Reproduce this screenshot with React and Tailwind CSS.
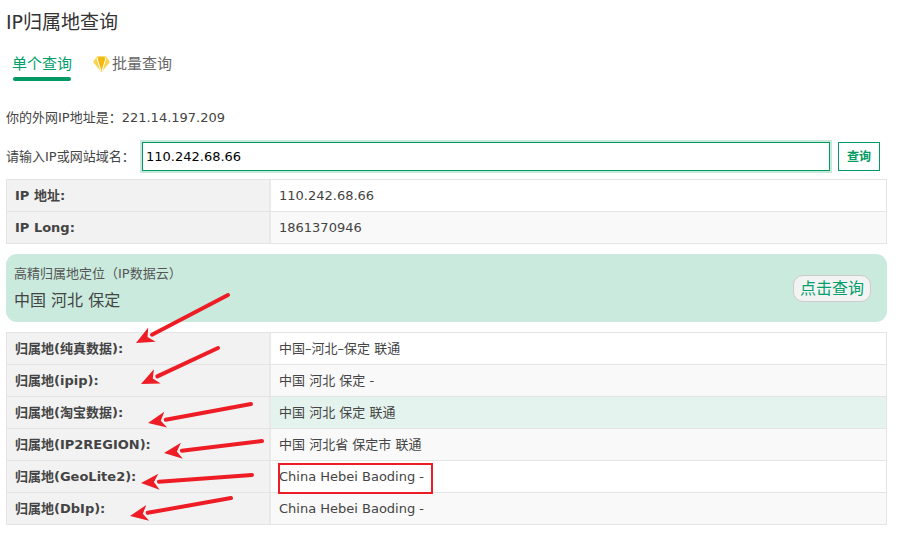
import React from "react";

const font = { fontFamily: '"DejaVu Sans", "Noto Sans CJK SC", sans-serif' };

const basicRows = [
  ["IP 地址:", "110.242.68.66"],
  ["IP Long:", "1861370946"],
];

const locationRows = [
  ["归属地(纯真数据):", "中国–河北–保定 联通"],
  ["归属地(ipip):", "中国 河北 保定 -"],
  ["归属地(淘宝数据):", "中国 河北 保定 联通", "bg-[#e4f3ee]"],
  ["归属地(IP2REGION):", "中国 河北省 保定市 联通"],
  ["归属地(GeoLite2):", "China Hebei Baoding -"],
  ["归属地(DbIp):", "China Hebei Baoding -"],
];

// start and tip of the red annotation arrows
const arrows = [
  [228, 295, 136, 343],
  [218, 348, 141, 384],
  [251, 404, 148, 423],
  [262, 441, 164, 453],
  [252, 475, 141, 483],
  [231, 498, 130, 516],
];

const Arrow = ({ line }) => {
  const [x1, y1, x2, y2] = line;
  const len = Math.hypot(x2 - x1, y2 - y1);
  const ux = (x2 - x1) / len;
  const uy = (y2 - y1) / len;
  const bx = x2 - ux * 18;
  const by = y2 - uy * 18;
  const nx = -uy * 8;
  const ny = ux * 8;
  return (
    <g>
      <path d={`M${x1} ${y1}L${bx} ${by}`} stroke="#ee1c25" strokeWidth="4" strokeLinecap="round" />
      <path d={`M${x2} ${y2}L${bx + nx} ${by + ny}L${x2 - ux * 13} ${y2 - uy * 13}L${bx - nx} ${by - ny}Z`} fill="#ee1c25" />
    </g>
  );
};

const InfoTable = ({ rows }) => (
  <div className="border-t border-l border-[#e4e4e4] w-[881px]">
    {rows.map(([label, value, tint], i) => (
      <div key={label} className="flex h-8 border-b border-[#e4e4e4] text-[13px] text-[#444]">
        <div className="w-[264px] shrink-0 flex items-center pl-2 font-bold bg-[#f2f2f2] border-r-2 border-[#e9e9e9]">
          {label}
        </div>
        <div
          className={`flex-1 flex items-center pl-2 border-r border-[#e4e4e4] ${
            tint ? tint : i % 2 === 1 ? "bg-[#f9f9f9]" : "bg-white"
          }`}
        >
          {value}
        </div>
      </div>
    ))}
  </div>
);

const Gem = () => (
  <svg width="17" height="16" viewBox="0 0 16 15">
    <path d="M4 1H12L15 5.500L8 14L1 5.500Z" fill="#fcd34d" stroke="#fcd34d" strokeWidth="1.500" strokeLinejoin="round" />
    <path d="M5.500 1H10.500L12 5.500L8 15L4 5.500Z" fill="#f5b80f" />
    <path d="M3.600 1.500L4.800 5.500L7.500 14M12.400 1.500L11.200 5.500L8.500 14" stroke="#fff" strokeWidth="1" fill="none" />
  </svg>
);

export default function App() {
  return (
    <div className="relative w-[905px] h-[536px] bg-white pl-1.5 overflow-hidden text-[#444]" style={font}>
      <h1 className="h-[44px] pt-[8px] text-[19px] leading-[28px] font-normal text-[#333]">IP归属地查询</h1>

      <div className="flex items-start h-[37px] pl-[6px]">
        <div className="w-[60px]">
          <div className="text-[15px] leading-[40px] h-[33px] text-[#00a06b] whitespace-nowrap">单个查询</div>
          <div className="h-[4px] w-[58px] ml-px rounded-full bg-[#009a62]"></div>
        </div>
        <div className="flex items-center ml-[21px] mt-[12px] text-[15px] leading-[16px] text-[#666] whitespace-nowrap">
          <Gem />
          <span className="ml-[2px]">批量查询</span>
        </div>
      </div>

      <p className="mt-[27px] h-[26px] text-[13px] leading-[20px] text-[#444]">{"你的外网IP地址是\uFF1A221.14.197.209"}</p>

      <div className="flex items-center h-[29px] mt-[8px]">
        <label className="w-[136px] text-[13px] text-[#444] whitespace-nowrap">{"请输入IP或网站域名\uFF1A"}</label>
        <input
          readOnly
          value="110.242.68.66"
          className="w-[688px] h-[29px] px-[3px] border border-[#009a62] text-[13px] text-black outline-none shadow-[0_0_0_2px_#c6e9db]"
          style={font}
        />
        <button className="ml-2 w-[42px] h-[29px] border border-[#009a62] text-[12px] font-bold text-[#009a62] bg-white">查询</button>
      </div>

      <div className="mt-[8px]">
        <InfoTable rows={basicRows} />
      </div>

      <div className="mt-[10px] w-[881px] h-[68px] rounded-[11px] bg-[#c9eadd] flex items-center justify-between pl-[8px] pr-[16px]">
        <div>
          <div className="text-[13px] leading-[20px] text-[#555]">{"高精归属地定位\uFF08IP数据云\uFF09"}</div>
          <div className="mt-[6px] text-[16px] leading-[22px] text-[#444]">中国 河北 保定</div>
        </div>
        <button className="w-[78px] h-[27px] pt-px rounded-[10px] border border-[#ccc] bg-[#f3f3f3] text-[16px] text-[#00a06b]">点击查询</button>
      </div>

      <div className="mt-[10px]">
        <InfoTable rows={locationRows} />
      </div>

      {/* annotations drawn over the page */}
      <div className="absolute left-[278px] top-[463px] w-[155px] h-[31px] border-2 border-[#ee1c25]"></div>
      <svg className="absolute left-0 top-0 pointer-events-none" width="905" height="536">
        {arrows.map((line) => (
          <Arrow key={line.join()} line={line} />
        ))}
      </svg>
    </div>
  );
}
